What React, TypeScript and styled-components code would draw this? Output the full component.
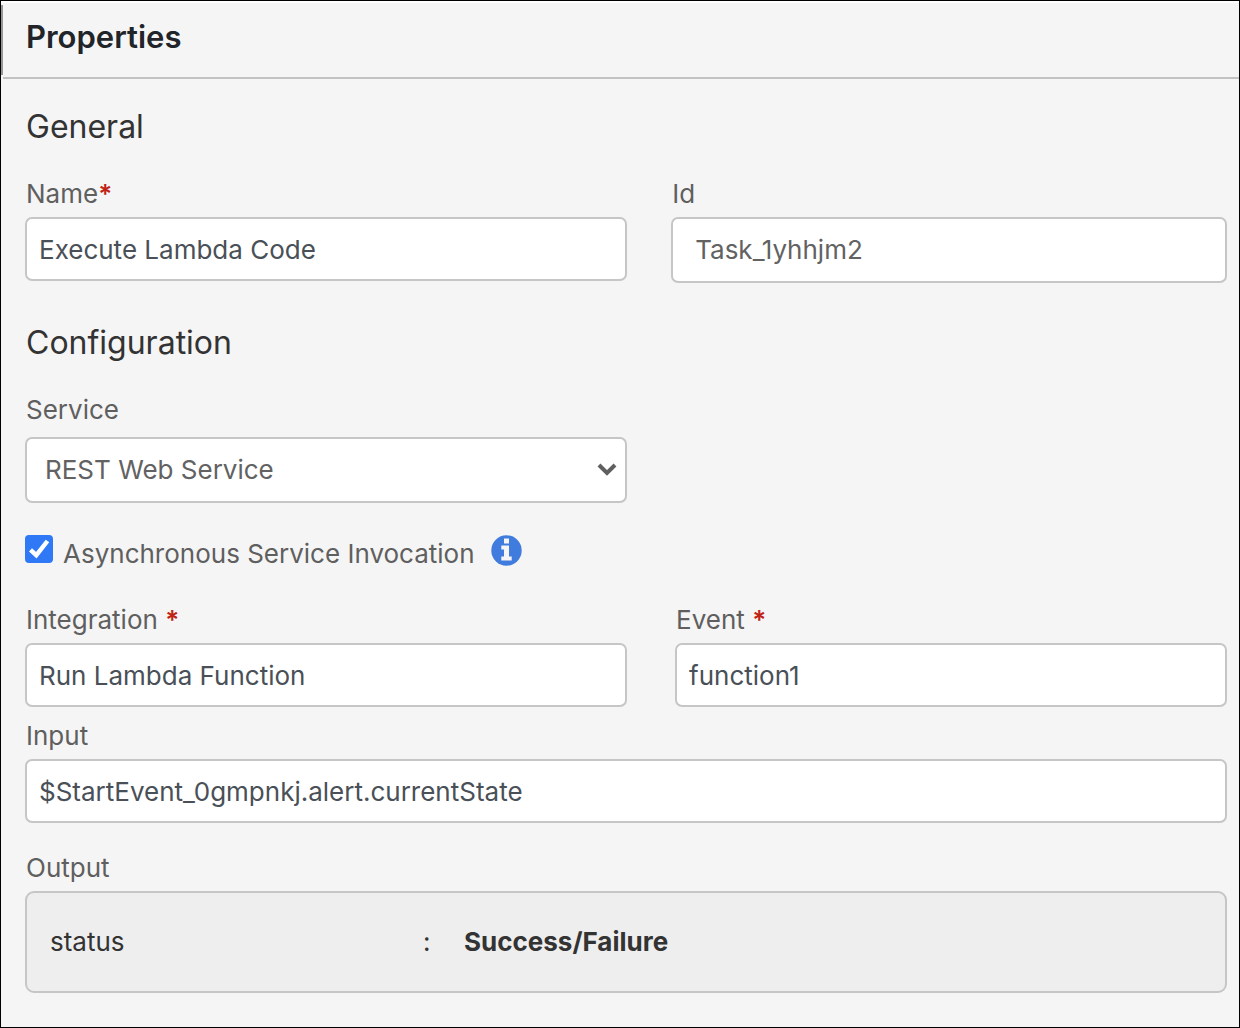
import { useId, useState } from "react";
import styled, { createGlobalStyle } from "styled-components";

const GlobalStyle = createGlobalStyle`
  *, *::before, *::after { box-sizing: border-box; }
  body {
    margin: 0;
    background: #f5f5f5;
    font-family: Inter, "Liberation Sans", sans-serif;
  }
`;

const Panel = styled.main`
  min-height: 100vh;
  border: 1px solid #000;
  background: #f5f5f5;
  color: #333;
`;

const PanelHeader = styled.header`
  display: flex;
  border-top: 2px solid #fff;
`;

const HeaderAccent = styled.span`
  width: 2px;
  margin: 2px 0 4px;
  background: #979797;
`;

const PanelTitle = styled.h1`
  flex: 1;
  margin: 0;
  padding: 14px 23px 20px;
  border-bottom: 2px solid #c2c2c2;
  color: #212529;
  font-size: 31px;
  font-weight: 600;
  line-height: 40px;
`;

const Form = styled.form`
  padding: 28px 12px 32px 24px;
`;

const Section = styled.section`
  & + & {
    margin-top: 40px;
  }
`;

const SectionTitle = styled.h2`
  margin: 0 0 32px;
  padding-left: 1px;
  color: #333;
  font-size: 32px;
  font-weight: 400;
  line-height: 40px;
`;

const FieldRow = styled.div<{ $columns?: string; $gap?: number; $top?: number }>`
  display: grid;
  grid-template-columns: ${(p) => p.$columns ?? "1fr"};
  column-gap: ${(p) => p.$gap ?? 0}px;
  margin-top: ${(p) => p.$top ?? 0}px;
  align-items: start;
`;

const Field = styled.div<{ $gap?: number }>`
  display: flex;
  flex-direction: column;
  gap: ${(p) => p.$gap ?? 8}px;
  min-width: 0;
`;

const Label = styled.label`
  padding-left: 1px;
  color: #5f5f5f;
  font-size: 26px;
  line-height: 30px;
`;

const Caption = styled(Label).attrs({ as: "h3" })`
  margin: 0;
  font-weight: 400;
`;

const Required = styled.span`
  color: #c02314;
  font-weight: 600;
`;

const TextInput = styled.input`
  width: 100%;
  height: 64px;
  padding: 0 12px;
  border: 2px solid #c6c6c6;
  border-radius: 7px;
  background: #fff;
  color: #495057;
  font: 400 26px/30px Inter, "Liberation Sans", sans-serif;

  &:read-only {
    height: 66px;
    padding: 0 22px 2px;
    color: #626262;
  }
`;

const SelectBox = styled.div`
  display: grid;
  align-items: center;

  > * {
    grid-area: 1 / 1;
  }

  > svg {
    justify-self: end;
    margin-right: 10px;
    pointer-events: none;
  }
`;

const Select = styled.select`
  appearance: none;
  width: 100%;
  height: 66px;
  padding: 0 48px 0 18px;
  border: 2px solid #c6c6c6;
  border-radius: 7px;
  background: #fff;
  color: #626262;
  font: 400 26px/30px Inter, "Liberation Sans", sans-serif;
`;

const CheckRow = styled.div`
  display: flex;
  align-items: flex-start;
  margin: 32px 0;
`;

const CheckBox = styled.span`
  display: grid;
  margin-right: 9px;

  > * {
    grid-area: 1 / 1;
  }

  > svg {
    pointer-events: none;
  }
`;

const CheckInput = styled.input`
  appearance: none;
  width: 28px;
  height: 28px;
  margin: 0;
  border: 2px solid #767676;
  border-radius: 4px;
  background: #fff;

  &:checked {
    border-color: #2f78f6;
    background: #2f78f6;
  }
`;

const CheckLabel = styled(Label)`
  line-height: 38px;
`;

const InfoButton = styled.button`
  display: flex;
  margin: 0 0 0 16px;
  padding: 0;
  border: 0;
  background: none;
`;

const OutputList = styled.dl`
  display: grid;
  grid-template-columns: 373px 41px 1fr;
  margin: 0;
  padding: 33px 23px;
  border: 2px solid #c6c6c6;
  border-radius: 9px;
  background: #eee;
  color: #333;
  font-size: 26px;
  line-height: 32px;
`;

const OutputValue = styled.dd<{ $strong?: boolean }>`
  margin: 0;
  font-weight: ${(p) => (p.$strong ? 700 : 400)};
`;

function Chevron() {
  return (
    <svg width="20" height="14" viewBox="0 0 20 14" aria-hidden="true">
      <path d="M2 2 10 10 18 2" fill="none" stroke="#5f5f5f" strokeWidth="4" />
    </svg>
  );
}

function Tick() {
  return (
    <svg width="28" height="28" viewBox="0 0 28 28" aria-hidden="true">
      <path d="M5.5 14.8 11.3 20.2 22.5 6" fill="none" stroke="#fff" strokeWidth="4.4" />
    </svg>
  );
}

function InfoIcon() {
  return (
    <svg width="31" height="31" viewBox="0 0 31 31" aria-hidden="true">
      <circle cx="15.5" cy="15.5" r="15.2" fill="#3f7cde" />
      <path d="M13 3.5h5v5h-5zM10.3 10.5h7.7v11h2.7v4H10.3v-4H13v-7h-2.7z" fill="#f5f5f5" />
    </svg>
  );
}

type TextFieldProps = {
  label: string;
  value: string;
  required?: "attached" | "spaced";
  readOnly?: boolean;
};

function TextField({ label, value, required, readOnly }: TextFieldProps) {
  const id = useId();
  return (
    <Field>
      <Label htmlFor={id}>
        {label}
        {required === "spaced" && " "}
        {required && <Required>*</Required>}
      </Label>
      <TextInput
        id={id}
        type="text"
        defaultValue={value}
        readOnly={readOnly}
        required={Boolean(required)}
      />
    </Field>
  );
}

export default function App() {
  const [asynchronous, setAsynchronous] = useState(true);

  return (
    <>
      <GlobalStyle />
      <Panel>
        <PanelHeader>
          <HeaderAccent />
          <PanelTitle>Properties</PanelTitle>
        </PanelHeader>
        <Form>
          <Section>
            <SectionTitle>General</SectionTitle>
            <FieldRow $columns="13fr 12fr" $gap={44}>
              <TextField label="Name" value="Execute Lambda Code" required="attached" />
              <TextField label="Id" value="Task_1yhhjm2" readOnly />
            </FieldRow>
          </Section>

          <Section>
            <SectionTitle>Configuration</SectionTitle>
            <FieldRow $columns="13fr 12fr" $gap={44}>
              <Field $gap={12}>
                <Label htmlFor="service">Service</Label>
                <SelectBox>
                  <Select id="service" defaultValue="rest">
                    <option value="rest">REST Web Service</option>
                  </Select>
                  <Chevron />
                </SelectBox>
              </Field>
            </FieldRow>

            <CheckRow>
              <CheckBox>
                <CheckInput
                  id="asynchronous"
                  type="checkbox"
                  checked={asynchronous}
                  onChange={(e) => setAsynchronous(e.target.checked)}
                />
                {asynchronous && <Tick />}
              </CheckBox>
              <CheckLabel htmlFor="asynchronous">Asynchronous Service Invocation</CheckLabel>
              <InfoButton type="button" aria-label="About asynchronous invocation">
                <InfoIcon />
              </InfoButton>
            </CheckRow>

            <FieldRow $columns="12fr 11fr" $gap={48}>
              <TextField label="Integration" value="Run Lambda Function" required="spaced" />
              <TextField label="Event" value="function1" required="spaced" />
            </FieldRow>
            <FieldRow $top={14}>
              <TextField label="Input" value="$StartEvent_0gmpnkj.alert.currentState" />
            </FieldRow>
            <FieldRow $top={30}>
              <Field>
                <Caption>Output</Caption>
                <OutputList>
                  <dt>status</dt>
                  <OutputValue>:</OutputValue>
                  <OutputValue $strong>Success/Failure</OutputValue>
                </OutputList>
              </Field>
            </FieldRow>
          </Section>
        </Form>
      </Panel>
    </>
  );
}
